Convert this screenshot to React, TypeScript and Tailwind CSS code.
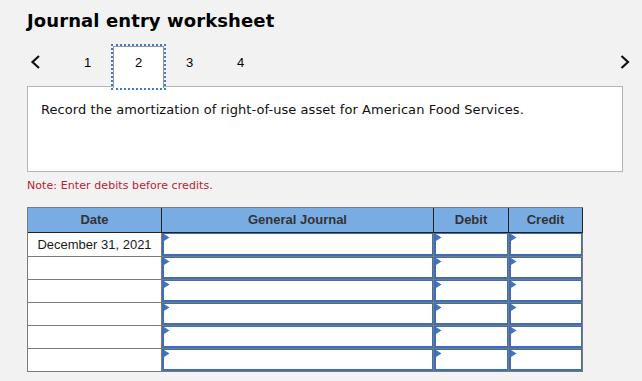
import React from "react";

const Tri = () => (
  <svg className="absolute left-0 top-0" width="6" height="7" viewBox="0 0 6 7">
    <path d="M0 0 L5.5 3.5 L0 7 Z" fill="#3d74c4" />
  </svg>
);

const InputCell = () => (
  <div className="border-r border-b border-[#7a7a7a] bg-white">
    <div className="relative h-full w-full border-t border-r border-l-2 border-b-2 border-[#3c6fb6]">
      <Tri />
    </div>
  </div>
);

export default function App() {
  const rows = [0, 1, 2, 3, 4, 5];
  return (
    <div className="relative h-[381px] w-[642px] overflow-hidden bg-[#f2f2f2] font-['DejaVu_Sans',sans-serif]">
      <h1 className="ml-[27px] pt-[10px] text-[18px] font-bold leading-[22px] tracking-[0.1px] text-black">
        Journal entry worksheet
      </h1>

      <div className="relative z-10 mt-[14px] flex h-[40px] items-start">
        <div className="w-[62px] pl-[30px] pt-[9px]">
          <svg width="11" height="14" viewBox="0 0 11 14">
            <path d="M9 1 L2.5 7 L9 13" fill="none" stroke="#111" strokeWidth="2.2" />
          </svg>
        </div>
        {["1", "2", "3", "4"].map((n) => (
          <div
            key={n}
            className={
              n === "2"
                ? "h-[42px] w-[51px] border border-b-0 border-[#999] bg-white pt-[8px] text-center font-['Liberation_Sans',sans-serif] text-[13px] leading-[16px] text-black outline-2 outline-dotted outline-[#3f7cc0]"
                : "h-[42px] w-[51px] border border-transparent pt-[8px] text-center font-['Liberation_Sans',sans-serif] text-[13px] leading-[16px] text-black"
            }
          >
            {n}
          </div>
        ))}
        <div className="flex-1" />
        <div className="mr-[12px] pt-[9px]">
          <svg width="10" height="14" viewBox="0 0 10 14">
            <path d="M1.5 1 L8 7 L1.5 13" fill="none" stroke="#111" strokeWidth="2.2" />
          </svg>
        </div>
      </div>

      <div className="ml-[27px] h-[86px] w-[596px] border border-[#b4b4b4] bg-white pl-[13px] pt-[15px] text-[13px] leading-[16px] tracking-[0.07px] text-[#111]">
        Record the amortization of right-of-use asset for American Food Services.
      </div>

      <div className="ml-[27px] mt-[7px] text-[11px] leading-[14px] tracking-[0.08px] text-[#c0192f]">
        Note: Enter debits before credits.
      </div>

      <div className="ml-[27px] mt-[14px] grid w-[556px] grid-cols-[134px_272px_75px_74px] grid-rows-[25px_24px_23px_23px_23px_23px_23px] border-l border-t border-[#7a7a7a] font-['Liberation_Sans',sans-serif]">
        {["Date", "General Journal", "Debit", "Credit"].map((h) => (
          <div
            key={h}
            className="flex items-center justify-center border-b border-r border-b-[#222] border-r-[#222] bg-[#7aace4] text-[13px] font-bold text-[#333]"
          >
            {h}
          </div>
        ))}
        {rows.map((r) => (
          <React.Fragment key={r}>
            <div className="flex items-center justify-center border-b border-r border-[#7a7a7a] bg-white text-[13px] text-[#1a1a1a]">
              {r === 0 ? "December 31, 2021" : ""}
            </div>
            <InputCell />
            <InputCell />
            <InputCell />
          </React.Fragment>
        ))}
      </div>
    </div>
  );
}
